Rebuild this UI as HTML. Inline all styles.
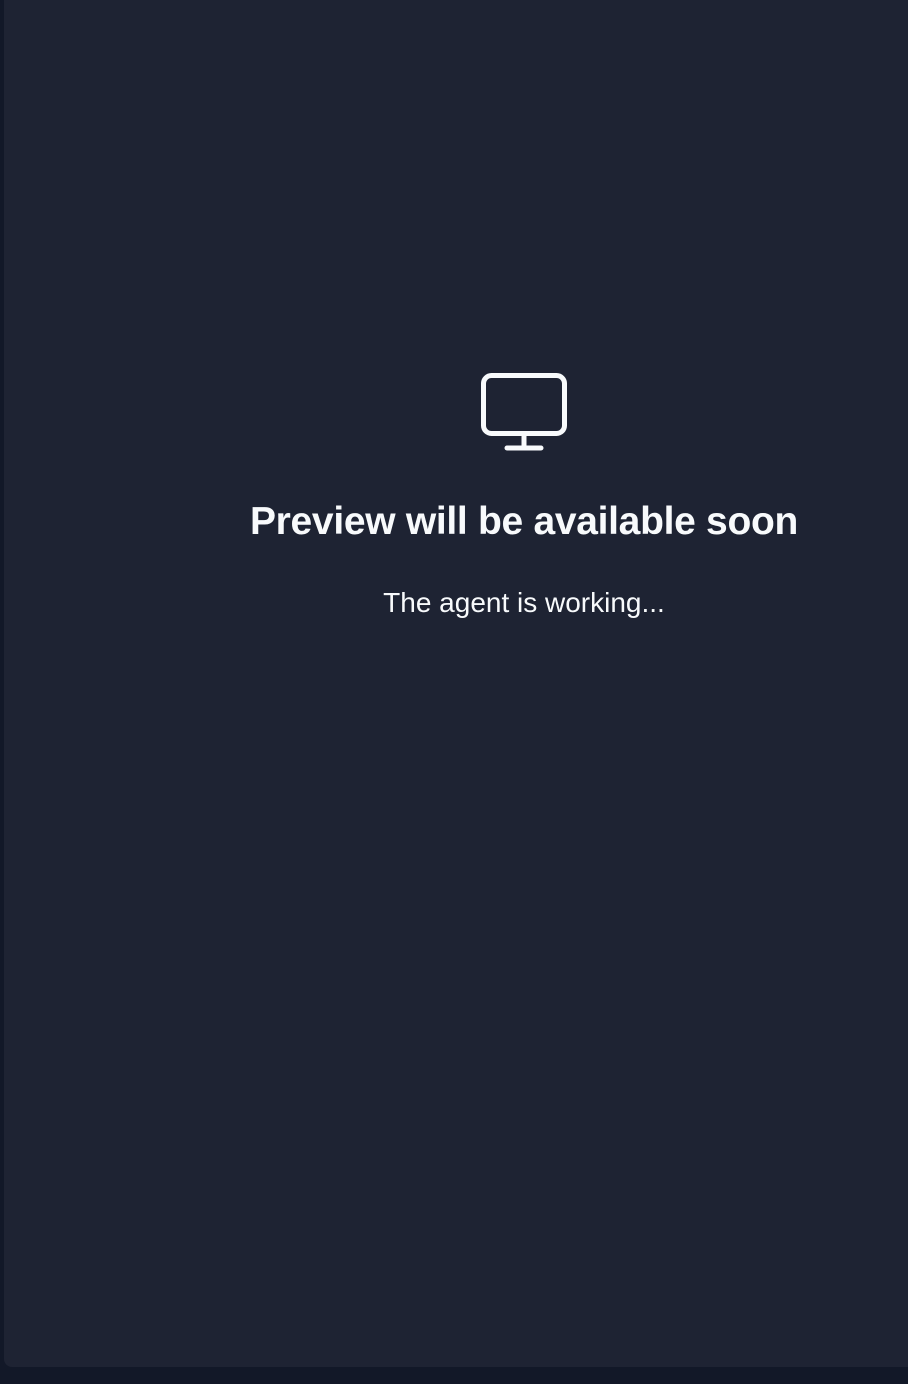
<!DOCTYPE html>
<html><head><style>
html,body{margin:0;padding:0;width:908px;height:1384px;background:#121828;overflow:hidden;font-family:"Liberation Sans",sans-serif;}
.panel{position:absolute;left:4px;top:0;width:920px;height:1367px;background:#1e2333;border-radius:0 0 0 8px;}
h1{position:absolute;left:0;width:1048px;top:500px;margin:0;text-align:center;color:#f8fafc;font-size:39px;font-weight:bold;letter-spacing:-0.3px;}
p{position:absolute;left:0;width:1048px;top:587px;margin:0;text-align:center;color:#f8fafc;font-size:28px;}
</style></head><body>
<div class="panel"></div>
<svg style="position:absolute;left:0;top:0" width="908" height="1384">
<rect x="483.5" y="375.5" width="81" height="58" rx="8" fill="none" stroke="#f8fafc" stroke-width="5"/>
<line x1="524" y1="434" x2="524" y2="447" stroke="#f8fafc" stroke-width="5"/>
<line x1="507" y1="448" x2="541" y2="448" stroke="#f8fafc" stroke-width="5" stroke-linecap="round"/>
</svg>
<h1>Preview will be available soon</h1>
<p>The agent is working...</p>
</body></html>
